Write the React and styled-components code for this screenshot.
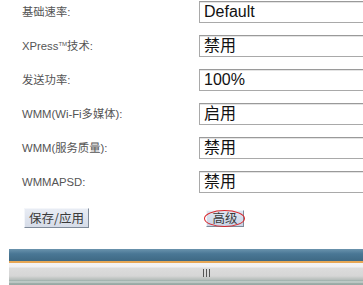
import React from 'react';
import styled, { createGlobalStyle } from 'styled-components';

const GlobalStyle = createGlobalStyle`
  html, body {
    margin: 0;
    padding: 0;
    background: #ffffff;
    overflow: hidden;
  }
  body {
    font-family: "Noto Sans CJK SC", "Liberation Sans", sans-serif;
  }
`;

const Page = styled.div`
  width: 363px;
  height: 285px;
  overflow: hidden;
  position: relative;
`;

const Form = styled.div`
  display: grid;
  grid-template-columns: 177px 200px;
  grid-auto-rows: 22px;
  row-gap: 12px;
  padding: 1px 0 0 22px;
  align-items: center;
`;

const Label = styled.div`
  font-family: "Liberation Sans", "Noto Sans CJK SC", sans-serif;
  font-size: 11.3px;
  color: #555;
  height: 22px;
  line-height: 22px;
  white-space: nowrap;
  overflow: visible;
`;

const Sup = styled.span`
  font-size: 6px;
  position: relative;
  top: -4px;
  line-height: 0;
`;

const Value = styled.div`
  box-sizing: border-box;
  height: 22px;
  width: 200px;
  border: 1px solid #a9a9a9;
  border-top-color: #9a9a9a;
  box-shadow: inset 0 1px 0 #e4e4e4;
  padding-left: 4px;
  font-family: "Liberation Sans", "Noto Sans CJK SC", sans-serif;
  font-size: 16px;
  line-height: 20px;
  color: #111;
  background: #fff;
`;

const Actions = styled.div`
  display: flex;
  align-items: center;
  padding: 15px 0 0 24px;
  height: 20px;
`;

const Button = styled.div`
  box-sizing: border-box;
  height: ${p => p.$h}px;
  width: ${p => p.$w}px;
  margin-left: ${p => p.$ml || 0}px;
  display: flex;
  align-items: center;
  justify-content: center;
  font-family: "Noto Sans CJK SC", sans-serif;
  font-size: 12.5px;
  line-height: 1;
  color: #3a3a3a;
  background: ${p => p.$bg};
  border: 1px solid;
  border-color: #f4f6fa #7f8a99 #7f8a99 #f4f6fa;
  position: relative;
`;

const Ring = styled.div`
  position: absolute;
  left: -3px;
  top: -1px;
  right: -2px;
  bottom: -1px;
  border: 1.5px solid #d8262a;
  border-radius: 50%;
`;

const Bar = styled.div`
  margin: 21px 0 0 9px;
  display: flex;
  flex-direction: column;
`;

const BlueBand = styled.div`
  height: 12px;
  background: linear-gradient(#6a93ad, #4a7795 40%, #3e6984);
`;

const OrangeLine = styled.div`
  height: 2px;
  background: #e7a755;
`;

const Track = styled.div`
  height: 17px;
  background: linear-gradient(#f4f4f6 0, #f0f0f2 4px, #dcdcdc 5px, #d6d6d6 13px, #c4c8c6 15px, #b4bcba 17px);
  display: flex;
  align-items: center;
  padding-left: 194px;
`;

const Grip = styled.div`
  display: flex;
  gap: 2px;
  height: 8px;
  margin-top: 2px;
`;

const GripLine = styled.div`
  width: 1px;
  height: 8px;
  background: #555;
`;

const Base = styled.div`
  height: 6px;
  background: linear-gradient(#98aba6, #c9d3d0 2px, #8ea19c 4px, #b6c3bf);
`;

const rows = [
  ['基础速率:', 'Default'],
  [<>XPress<Sup>TM</Sup>技术:</>, '禁用'],
  ['发送功率:', '100%'],
  ['WMM(Wi-Fi多媒体):', '启用'],
  ['WMM(服务质量):', '禁用'],
  ['WMMAPSD:', '禁用'],
];

const App = () => (
  <Page>
    <GlobalStyle />
    <Form>
      {rows.map(([label, value], i) => (
        <React.Fragment key={i}>
          <Label>{label}</Label>
          <Value>{value}</Value>
        </React.Fragment>
      ))}
    </Form>
    <Actions>
      <Button $w={65} $h={20} $bg="linear-gradient(#e8ecf4, #d6dce8)">保存/应用</Button>
      <Button $w={38} $h={17} $ml={117} $bg="linear-gradient(#dfe6f2, #c9d4e6)">
        高级
        <Ring />
      </Button>
    </Actions>
    <Bar>
      <BlueBand />
      <OrangeLine />
      <Track>
        <Grip>
          <GripLine />
          <GripLine />
          <GripLine />
        </Grip>
      </Track>
      <Base />
    </Bar>
  </Page>
);

export default App;
